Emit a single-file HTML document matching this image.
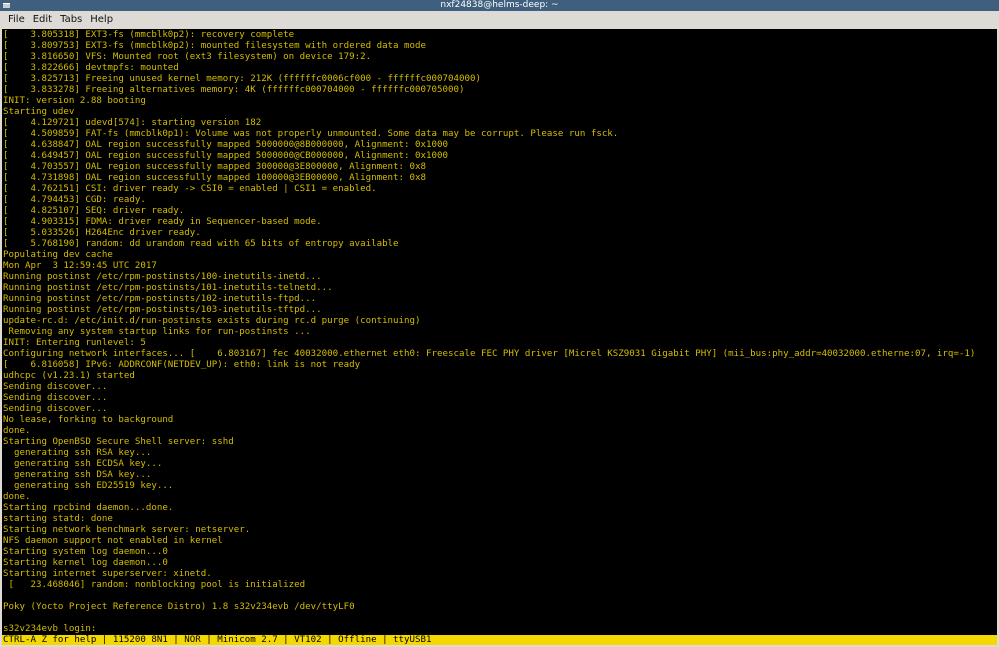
<!DOCTYPE html>
<html><head><meta charset="utf-8"><style>
html,body{margin:0;padding:0;width:999px;height:647px;overflow:hidden;background:#000;}
#title{position:absolute;left:0;top:0;width:999px;height:11px;background:#3e5f7d;color:#fff;font:9px "DejaVu Sans",sans-serif;text-align:center;line-height:11px;}
#ico{position:absolute;left:3px;top:3px;width:7px;height:4px;background:#ccc;border-top:1px solid #fff;}
#menu{position:absolute;left:0;top:11px;width:999px;height:18px;background:#dedbd6;font:10px "DejaVu Sans",sans-serif;color:#111;line-height:18px;}
#menu span{margin-left:8px;}
#term{position:absolute;left:3px;top:30px;margin:0;font-family:"DejaVu Sans Mono",monospace;font-size:9.13px;line-height:11px;color:#d4bd00;white-space:pre;}
#status{position:absolute;left:2px;top:635px;width:995px;height:10px;background:#f5d800;color:#000;font-family:"DejaVu Sans Mono",monospace;font-size:9.13px;line-height:10px;white-space:pre;padding-left:1px;}
#bot{position:absolute;left:0;top:645px;width:999px;height:2px;background:#dedbd6;}
#lb{position:absolute;left:0;top:29px;width:2px;height:618px;background:#dedbd6;}
#rb{position:absolute;right:0;top:29px;width:2px;height:618px;background:#dedbd6;}
</style></head><body>
<div id="title">nxf24838@helms-deep: ~</div>
<div id="ico"></div>
<div id="menu"><span>File</span><span>Edit</span><span>Tabs</span><span>Help</span></div>
<pre id="term">[    3.805318] EXT3-fs (mmcblk0p2): recovery complete
[    3.809753] EXT3-fs (mmcblk0p2): mounted filesystem with ordered data mode
[    3.816650] VFS: Mounted root (ext3 filesystem) on device 179:2.
[    3.822666] devtmpfs: mounted
[    3.825713] Freeing unused kernel memory: 212K (ffffffc0006cf000 - ffffffc000704000)
[    3.833278] Freeing alternatives memory: 4K (ffffffc000704000 - ffffffc000705000)
INIT: version 2.88 booting
Starting udev
[    4.129721] udevd[574]: starting version 182
[    4.509859] FAT-fs (mmcblk0p1): Volume was not properly unmounted. Some data may be corrupt. Please run fsck.
[    4.638847] OAL region successfully mapped 5000000@8B000000, Alignment: 0x1000
[    4.649457] OAL region successfully mapped 5000000@CB000000, Alignment: 0x1000
[    4.703557] OAL region successfully mapped 300000@3E800000, Alignment: 0x8
[    4.731898] OAL region successfully mapped 100000@3EB00000, Alignment: 0x8
[    4.762151] CSI: driver ready -&gt; CSI0 = enabled | CSI1 = enabled.
[    4.794453] CGD: ready.
[    4.825107] SEQ: driver ready.
[    4.903315] FDMA: driver ready in Sequencer-based mode.
[    5.033526] H264Enc driver ready.
[    5.768190] random: dd urandom read with 65 bits of entropy available
Populating dev cache
Mon Apr  3 12:59:45 UTC 2017
Running postinst /etc/rpm-postinsts/100-inetutils-inetd...
Running postinst /etc/rpm-postinsts/101-inetutils-telnetd...
Running postinst /etc/rpm-postinsts/102-inetutils-ftpd...
Running postinst /etc/rpm-postinsts/103-inetutils-tftpd...
update-rc.d: /etc/init.d/run-postinsts exists during rc.d purge (continuing)
 Removing any system startup links for run-postinsts ...
INIT: Entering runlevel: 5
Configuring network interfaces... [    6.803167] fec 40032000.ethernet eth0: Freescale FEC PHY driver [Micrel KSZ9031 Gigabit PHY] (mii_bus:phy_addr=40032000.etherne:07, irq=-1)
[    6.816058] IPv6: ADDRCONF(NETDEV_UP): eth0: link is not ready
udhcpc (v1.23.1) started
Sending discover...
Sending discover...
Sending discover...
No lease, forking to background
done.
Starting OpenBSD Secure Shell server: sshd
  generating ssh RSA key...
  generating ssh ECDSA key...
  generating ssh DSA key...
  generating ssh ED25519 key...
done.
Starting rpcbind daemon...done.
starting statd: done
Starting network benchmark server: netserver.
NFS daemon support not enabled in kernel
Starting system log daemon...0
Starting kernel log daemon...0
Starting internet superserver: xinetd.
 [   23.468046] random: nonblocking pool is initialized

Poky (Yocto Project Reference Distro) 1.8 s32v234evb /dev/ttyLF0

s32v234evb login: </pre>
<div id="status">CTRL-A Z for help | 115200 8N1 | NOR | Minicom 2.7 | VT102 | Offline | ttyUSB1</div>
<div id="bot"></div>
<div id="lb"></div>
<div id="rb"></div>
</body></html>
